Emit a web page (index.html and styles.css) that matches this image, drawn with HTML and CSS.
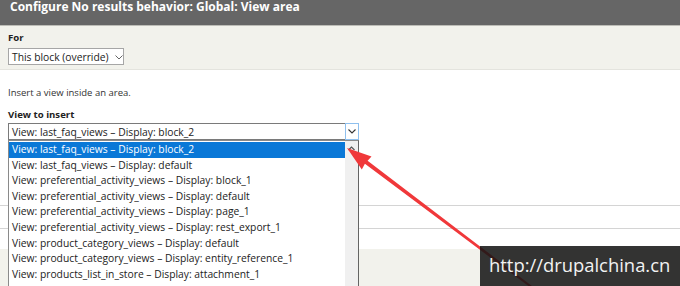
FILE: index.html
```html
<!DOCTYPE html>
<html>
<head>
<meta charset="utf-8">
<link rel="stylesheet" href="styles.css">
</head>
<body>
<div class="dialog">
  <div class="titlebar"><h1 class="title">Configure No results behavior: Global: View area</h1></div>
  <div class="override">
    <div class="label">For</div>
    <div class="select small">This block (override)<svg class="chev" width="8" height="5" viewBox="0 0 8 5"><path d="M0.5 0.5 L4 4 L7.5 0.5" fill="none" stroke="#666" stroke-width="1"/></svg></div>
  </div>
  <div class="content">
    <p class="desc">Insert a view inside an area.</p>
    <div class="label">View to insert</div>
    <div class="field">
      <div class="select wide"><span class="value">View: last_faq_views – Display: block_2</span><span class="btn"><svg width="8" height="5" viewBox="0 0 8 5"><path d="M0.5 0.5 L4 4 L7.5 0.5" fill="none" stroke="#333" stroke-width="1.1"/></svg></span></div>
      <div class="dropdown">
        <ul class="options">
          <li class="opt active">View: last_faq_views – Display: block_2</li>
          <li class="opt">View: last_faq_views – Display: default</li>
          <li class="opt">View: preferential_activity_views – Display: block_1</li>
          <li class="opt">View: preferential_activity_views – Display: default</li>
          <li class="opt">View: preferential_activity_views – Display: page_1</li>
          <li class="opt">View: preferential_activity_views – Display: rest_export_1</li>
          <li class="opt">View: product_category_views – Display: default</li>
          <li class="opt">View: product_category_views – Display: entity_reference_1</li>
          <li class="opt">View: products_list_in_store – Display: attachment_1</li>
        </ul>
        <div class="scrollbar"><svg width="7" height="5" viewBox="0 0 7 5"><path d="M0.5 4 L3.5 1 L6.5 4" fill="none" stroke="#555" stroke-width="1.2"/></svg></div>
      </div>
    </div>
    <div class="rows">
      <div class="row"></div>
      <div class="row last"></div>
    </div>
  </div>
  <div class="buttonpane"></div>
</div>
<svg class="arrow" width="680" height="286" viewBox="0 0 680 286">
  <polygon fill="#f0383a" points="347,148 371.5,156.5 367.6,160.8 536.5,289.5 535.1,291 364.9,163.8 361.8,169.5"/>
</svg>
<div class="watermark">http://drupalchina.cn</div>
</body>
</html>
```
FILE: styles.css
```css
html, body {
  margin: 0;
  padding: 0;
}
body {
  width: 680px;
  height: 286px;
  overflow: hidden;
  position: relative;
  background: #fff;
  font-family: "Open Sans", "Noto Sans", sans-serif;
  color: #222;
}
.dialog {
  display: flex;
  flex-direction: column;
  height: 286px;
}
.titlebar {
  height: 25px;
  background: #666666;
  border-bottom: 1px solid #bdbdb7;
  padding-left: 10px;
}
.title {
  margin: 0;
  font-size: 12px;
  line-height: 14px;
  font-weight: 700;
  color: #fff;
}
.override {
  background: #f2f2ec;
  padding: 5px 8px 4px;
  border-bottom: 1px solid #e4e4de;
}
.label {
  font-size: 9.6px;
  font-weight: 700;
  line-height: 14px;
  color: #222;
}
.select {
  box-sizing: border-box;
  height: 17px;
  background: #fff;
  display: flex;
  align-items: center;
  font-size: 10.3px;
  color: #222;
}
.select.small {
  margin-top: 3px;
  width: 116px;
  border: 1px solid #a6a6a6;
  padding-left: 3px;
  gap: 6px;
}
.chev {
  margin-top: 1px;
}
.content {
  padding: 16px 8px 0;
  flex: 1;
  display: flex;
  flex-direction: column;
}
.desc {
  margin: 0 0 9px;
  font-size: 9.5px;
  line-height: 13px;
  color: #333;
}
.field {
  position: relative;
  margin-top: 1px;
}
.select.wide {
  width: 351px;
  border: 1px solid #7a7a7a;
  padding-left: 3px;
  justify-content: space-between;
}
.btn {
  box-sizing: border-box;
  width: 14px;
  height: 17px;
  margin: -1px -1px -1px 0;
  border: 1px solid #8fc0ee;
  background: #fff;
  display: flex;
  align-items: center;
  justify-content: center;
}
.dropdown {
  position: absolute;
  top: 17px;
  left: 0;
  width: 351px;
  height: 160px;
  box-sizing: border-box;
  border: 1px solid #8a8a8a;
  border-right-color: #646464;
  background: #fff;
  display: flex;
  z-index: 5;
}
.options {
  list-style: none;
  margin: 0;
  padding: 1px 0 0;
  flex: 1;
}
.opt {
  height: 15.6px;
  line-height: 15.6px;
  padding-left: 3px;
  font-size: 10.3px;
  color: #222;
  white-space: nowrap;
}
.opt.active {
  background: #0a78d7;
  color: #fff;
}
.scrollbar {
  width: 13px;
  background: #f0f0f0;
  display: flex;
  justify-content: center;
  padding-top: 5px;
  box-sizing: border-box;
  align-items: flex-start;
}
.rows {
  margin: 65px -8px 0;
}
.row {
  height: 22px;
  border-top: 1px solid #d4d4d4;
}
.row.last {
  height: 19px;
}
.buttonpane {
  height: 37px;
  background: #f2f2ec;
}
.arrow {
  position: absolute;
  left: 0;
  top: 0;
  z-index: 8;
  pointer-events: none;
}
.watermark {
  position: absolute;
  right: 0;
  bottom: 0;
  width: 200px;
  height: 40px;
  box-sizing: border-box;
  padding-left: 9px;
  background: rgba(22, 22, 22, 0.87);
  color: #f2f2f2;
  font-size: 18.4px;
  line-height: 38px;
  z-index: 9;
}
```
